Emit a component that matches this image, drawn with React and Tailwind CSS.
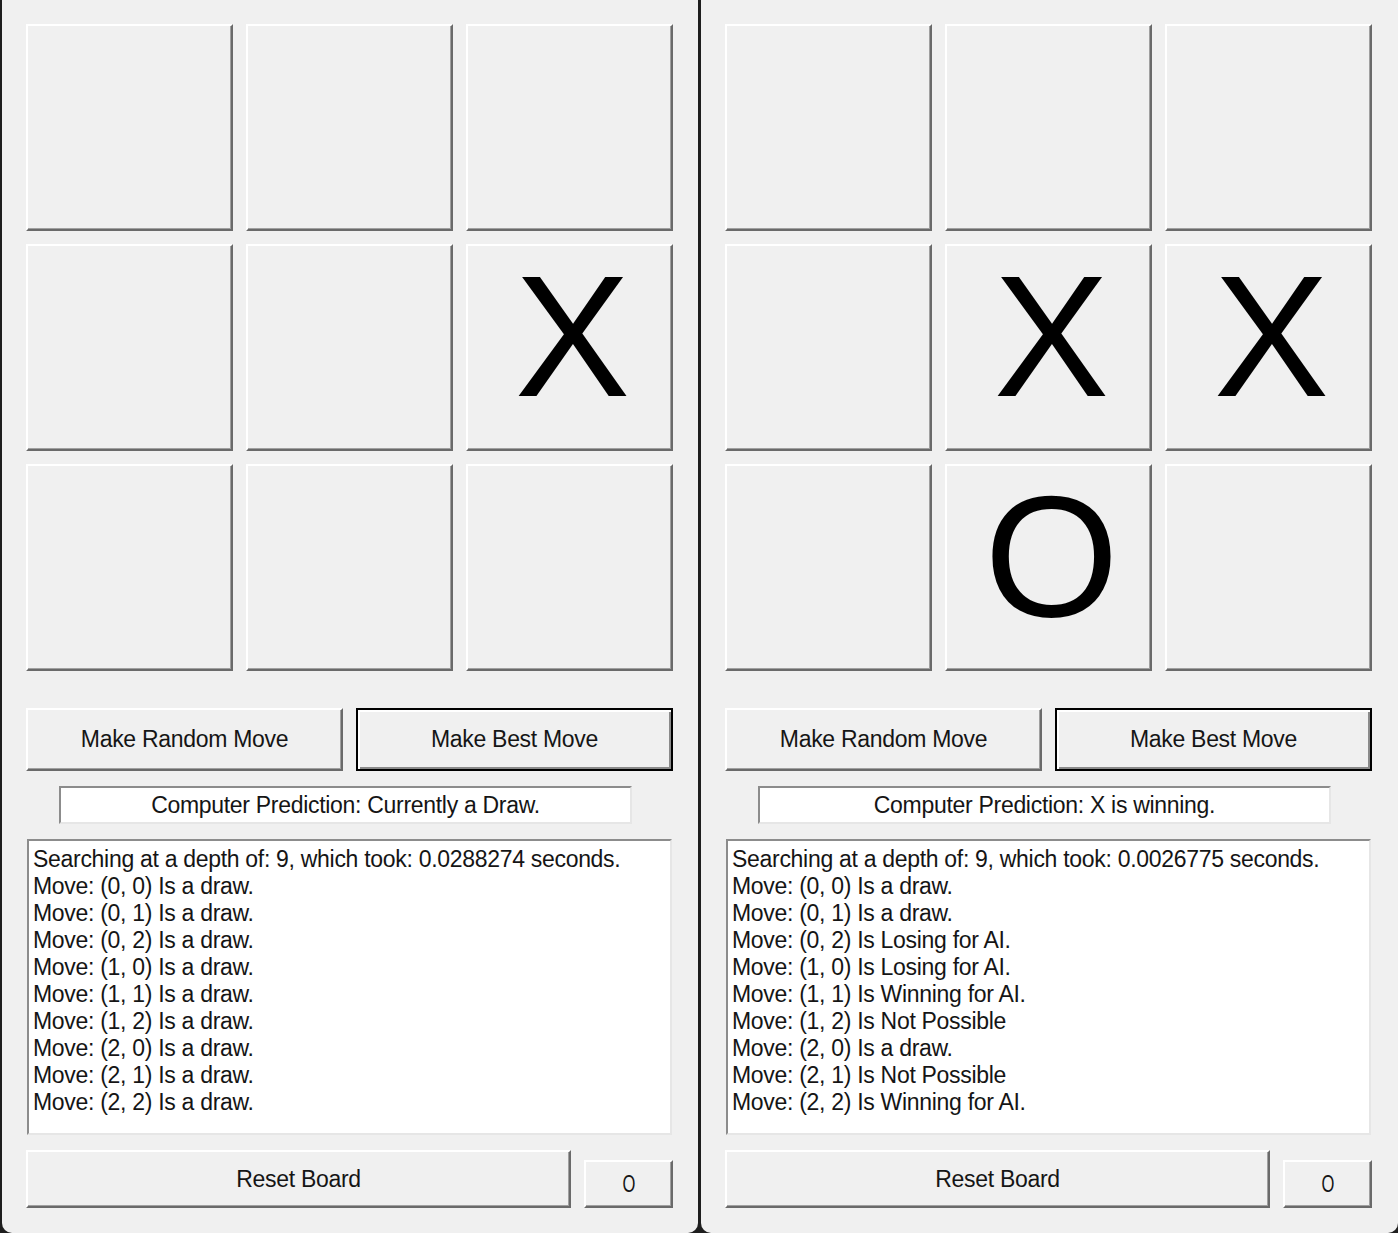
const font = { fontFamily: '"Liberation Sans", Arial, sans-serif' };

const games = [
  {
    board: ["", "", "", "", "", "X", "", "", ""],
    prediction: "Computer Prediction: Currently a Draw.",
    log: [
      "Searching at a depth of: 9, which took: 0.0288274 seconds.",
      "Move: (0, 0) Is a draw.",
      "Move: (0, 1) Is a draw.",
      "Move: (0, 2) Is a draw.",
      "Move: (1, 0) Is a draw.",
      "Move: (1, 1) Is a draw.",
      "Move: (1, 2) Is a draw.",
      "Move: (2, 0) Is a draw.",
      "Move: (2, 1) Is a draw.",
      "Move: (2, 2) Is a draw.",
    ],
  },
  {
    board: ["", "", "", "", "X", "X", "", "O", ""],
    prediction: "Computer Prediction: X is winning.",
    log: [
      "Searching at a depth of: 9, which took: 0.0026775 seconds.",
      "Move: (0, 0) Is a draw.",
      "Move: (0, 1) Is a draw.",
      "Move: (0, 2) Is Losing for AI.",
      "Move: (1, 0) Is Losing for AI.",
      "Move: (1, 1) Is Winning for AI.",
      "Move: (1, 2) Is Not Possible",
      "Move: (2, 0) Is a draw.",
      "Move: (2, 1) Is Not Possible",
      "Move: (2, 2) Is Winning for AI.",
    ],
  },
];

// classic raised 3d button edge
const raised =
  "border-t-2 border-l-2 border-t-white border-l-white border-r-2 border-b-2 border-r-[#6a6a6a] border-b-[#6a6a6a] shadow-[inset_-1px_-1px_0_#a0a0a0] bg-[#f0f0f0]";

function Cell({ mark }) {
  return (
    <div className={`${raised} w-[207px] h-[207px] flex items-center justify-center pb-[22px] pl-[6px]`}>
      <span className="text-[173px] leading-none text-black">{mark}</span>
    </div>
  );
}

function GameWindow({ game, width }) {
  return (
    <div className={`${width} h-[1233px] bg-[#f0f0f0] rounded-b-[10px] pt-[24px] pl-[24px] flex flex-col text-[#151515]`} style={font}>
      {/* BOARD */}
      <div className="grid grid-cols-[207px_207px_207px] gap-[13px]">
        {game.board.map((mark, i) => (
          <Cell key={i} mark={mark} />
        ))}
      </div>

      {/* MOVE BUTTONS */}
      <div className="flex gap-[13px] mt-[37px]">
        <button className={`${raised} w-[317px] h-[63px] text-[23px] tracking-[-0.3px]`}>
          Make Random Move
        </button>
        <button className="w-[317px] h-[63px] text-[23px] tracking-[-0.3px] bg-[#f0f0f0] border-2 border-black shadow-[inset_2px_2px_0_#fff,inset_-2px_-2px_0_#8a8a8a]">
          Make Best Move
        </button>
      </div>

      {/* PREDICTION */}
      <div className="ml-[33px] mt-[15px] w-[573px] h-[38px] bg-white border-t-2 border-l-2 border-t-[#8c8c8c] border-l-[#8c8c8c] border-r-2 border-b-2 border-r-[#e6e6e6] border-b-[#e6e6e6] flex items-center justify-center text-[23px] tracking-[-0.3px]">
        {game.prediction}
      </div>

      {/* LOG */}
      <div className="ml-[1px] mt-[15px] w-[645px] h-[296px] bg-white border-t-2 border-l-2 border-t-[#8c8c8c] border-l-[#8c8c8c] border-r-2 border-b-2 border-r-[#e6e6e6] border-b-[#e6e6e6] pl-[4px] pt-[5px] text-[23px] leading-[27px] tracking-[-0.3px]">
        {game.log.map((line, i) => (
          <div key={i}>{line}</div>
        ))}
      </div>

      {/* RESET */}
      <div className="flex items-end gap-[13px] mt-[15px]">
        <button className={`${raised} w-[545px] h-[58px] text-[23px] tracking-[-0.3px]`}>
          Reset Board
        </button>
        <button className={`${raised} w-[89px] h-[48px] text-[23px] pt-[1px] flex items-center justify-center`}>
          <span className="inline-block scale-x-[0.72]">O</span>
        </button>
      </div>
    </div>
  );
}

export default function App() {
  return (
    <div className="w-[1398px] h-[1233px] bg-[#1e1e1e] flex pl-[2px] gap-[3px] overflow-hidden">
      <GameWindow game={games[0]} width="w-[696px]" />
      <GameWindow game={games[1]} width="w-[697px]" />
    </div>
  );
}
